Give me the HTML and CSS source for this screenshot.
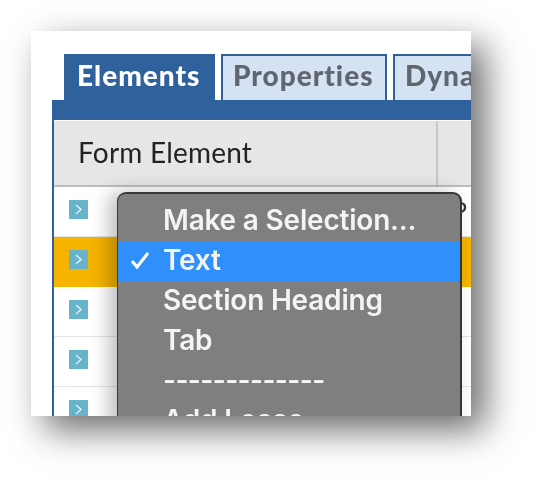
FILE: index.html
```html
<!DOCTYPE html>
<html lang="en">
<head>
  <meta charset="UTF-8" />
  <title>Form Elements</title>
  <link rel="stylesheet" href="styles.css">
</head>
<body>
  <div class="card">
    <div class="tabs">
      <div class="tab active">Elements</div>
      <div class="tab">Properties</div>
      <div class="tab">Dynamic</div>
    </div>
    <div class="panel">
      <div class="head">
        <div class="head-cell">Form Element</div>
        <div class="head-rest"></div>
      </div>
      <div class="row">
        <span class="arrow"><svg viewBox="0 0 19 19"><path d="M7 5l5 4.5-5 4.5" /></svg></span>
        <span class="stray">P</span>
      </div>
      <div class="row selected">
        <span class="arrow"><svg viewBox="0 0 19 19"><path d="M7 5l5 4.5-5 4.5" /></svg></span>
      </div>
      <div class="row">
        <span class="arrow"><svg viewBox="0 0 19 19"><path d="M7 5l5 4.5-5 4.5" /></svg></span>
      </div>
      <div class="row">
        <span class="arrow"><svg viewBox="0 0 19 19"><path d="M7 5l5 4.5-5 4.5" /></svg></span>
      </div>
      <div class="row">
        <span class="arrow"><svg viewBox="0 0 19 19"><path d="M7 5l5 4.5-5 4.5" /></svg></span>
      </div>
    </div>

    <div class="menu">
      <div class="menu-item">Make a Selection...</div>
      <div class="menu-item current">
        <svg class="check" viewBox="0 0 22 20"><path d="M3 11l5 6L19 3" /></svg>
        Text
      </div>
      <div class="menu-item">Section Heading</div>
      <div class="menu-item">Tab</div>
      <div class="menu-item sep">-------------</div>
      <div class="menu-item">Add Lease</div>
    </div>
  </div>
</body>
</html>
```

FILE: styles.css
```css
html, body {
  margin: 0;
  padding: 0;
  background: #fff;
}
body {
  width: 535px;
  height: 481px;
  padding: 31px 0 0 31px;
  box-sizing: border-box;
  overflow: hidden;
  font-family: "Lato", sans-serif;
}
.card {
  position: relative;
  width: 440px;
  height: 385px;
  padding: 23px 0 0 21px;
  box-sizing: border-box;
  background: #fff;
  overflow: hidden;
  filter: blur(0.6px);
}
body::before {
  content: "";
  position: absolute;
  left: 31px;
  top: 31px;
  width: 440px;
  height: 385px;
  box-shadow: 14px 14px 34px rgba(0,0,0,0.58);
}
.tabs {
  display: flex;
  gap: 6px;
  height: 46px;
  margin-left: 12px;
}
.tab {
  flex: none;
  width: 166px;
  box-sizing: border-box;
  padding: 0 0 0 10px;
  background: #d5e2f3;
  border: 2px solid #2f619d;
  border-bottom: none;
  color: #60666e;
  font-size: 28px;
  font-weight: 900;
  letter-spacing: 1px;
  line-height: 39px;
  white-space: nowrap;
}
.tab.active {
  width: 151px;
  padding-left: 11px;
  background: #2f619d;
  color: #fff;
}
.panel {
  width: 440px;
  border-left: 2px solid #2f619d;
  border-top: 20px solid #2f619d;
}
.head {
  display: flex;
  height: 66px;
  margin-top: 1px;
  box-sizing: border-box;
  background: #e6e6e6;
  border-bottom: 2px solid #bdbdbd;
}
.head-cell {
  width: 384px;
  padding-left: 24px;
  box-sizing: border-box;
  border-right: 2px solid #c8c8c8;
  color: #222;
  font-size: 28px;
  letter-spacing: 0.2px;
  line-height: 62px;
}
.head-rest {
  flex: 1;
}
.row {
  display: flex;
  align-items: center;
  justify-content: space-between;
  height: 50px;
  padding: 0 0 4px 15px;
  box-sizing: border-box;
  border-bottom: 1px solid #e4e4e4;
  background: #fff;
}
.row.selected {
  background: #f6b400;
  border-bottom: none;
  padding-bottom: 6px;
}
.arrow {
  display: block;
  width: 19px;
  height: 19px;
  background: #66b3ca;
}
.arrow svg {
  display: block;
  width: 19px;
  height: 19px;
}
.arrow path {
  fill: none;
  stroke: #e8f4f8;
  stroke-width: 1.3;
}
.stray {
  margin-right: 27px;
  color: #333;
  font-size: 24px;
}
.menu {
  position: absolute;
  left: 86px;
  top: 161px;
  width: 345px;
  height: 240px;
  box-sizing: border-box;
  padding-top: 7px;
  background: #7f7f7f;
  border: 1px solid #3a3a3a;
  border-top: 2px solid #3a3a3a;
  border-right: 2px solid #333;
  border-radius: 9px 9px 0 0;
  box-shadow: -8px 0 18px rgba(0,0,0,0.25);
  overflow: hidden;
}
.menu-item {
  position: relative;
  height: 40px;
  padding-left: 45px;
  color: #f4f4f4;
  font-family: "Inter", sans-serif;
  font-size: 28px;
  font-weight: 600;
  letter-spacing: -0.2px;
  line-height: 38px;
  white-space: nowrap;
}
.menu-item.sep {
  letter-spacing: -0.6px;
}
.menu-item.current {
  background: #2f8ffb;
}
.check {
  position: absolute;
  left: 11px;
  top: 9px;
  width: 22px;
  height: 20px;
  fill: none;
  stroke: #fff;
  stroke-width: 3;
}
```
